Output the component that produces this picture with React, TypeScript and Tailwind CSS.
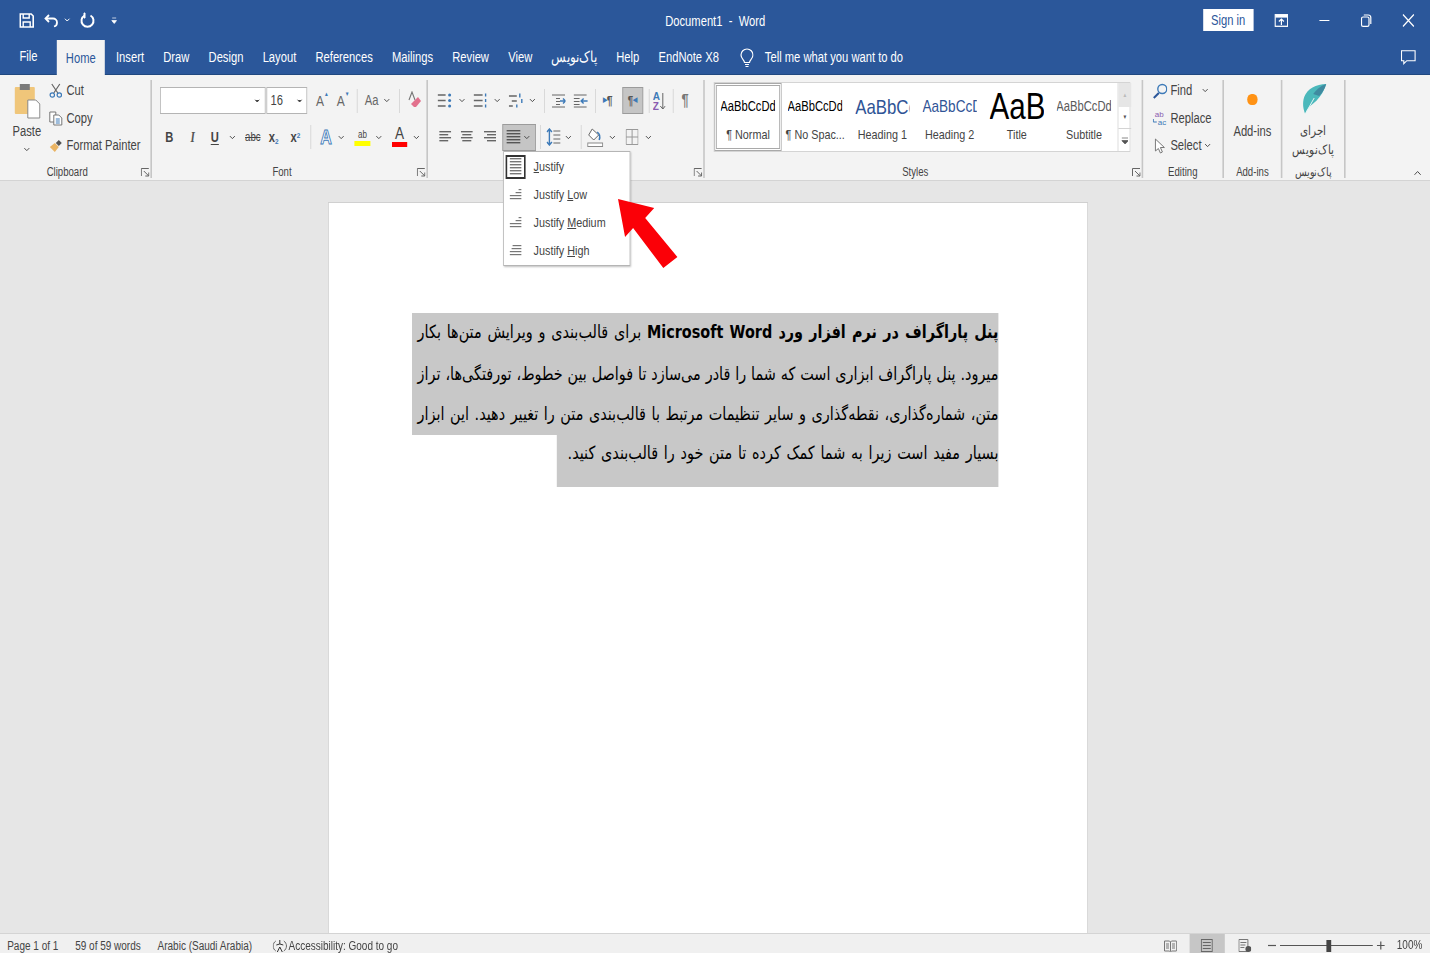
import { ChevronDown, ChevronUp } from "lucide-react";
import type { ReactNode } from "react";

// the whole window is drawn 1.25x wide and squeezed back (the screenshot is a squeezed image),
// so all x values below are in that wide space. Ico stretches its drawing to match.
const Chev = ({ className = "" }: { className?: string }) => (
  <ChevronDown className={"w-[11px] h-[9px] text-[#444] shrink-0 " + className} strokeWidth={2.5} preserveAspectRatio="none" />
);

const Ico = ({ w = 16, h = 16, children, className = "" }: { w?: number; h?: number; children: ReactNode; className?: string }) => (
  <svg width={w * 1.25} height={h} viewBox={`0 0 ${w} ${h}`} preserveAspectRatio="none" fill="none" className={"shrink-0 " + className}>
    {children}
  </svg>
);

const Sep = ({ h = "h-[24px]", className = "" }: { h?: string; className?: string }) => (
  <div className={`w-px ${h} bg-[#d2d2d2] shrink-0 ${className}`} />
);

const Launcher = () => (
  <Ico w={9} h={9}>
    <path d="M.5 8V.5H8M3 3l5 5M8 4.5V8H4.5" stroke="#666" />
  </Ico>
);

type Align = "left" | "center" | "right" | "full";

const Lines = ({ rows, w = 12, color = "#666", align = "full" }: { rows: number; w?: number; color?: string; align?: Align }) => (
  <Ico w={w} h={rows * 3}>
    {Array.from({ length: rows }, (_, i) => {
      const short = i % 2 === 1 && align !== "full";
      const width = short ? w - 3 : w;
      const x = !short || align === "left" ? 0 : align === "right" ? 3 : 1.5;
      return <rect key={i} x={x} y={i * 3} width={width} height={1.4} fill={color} />;
    })}
  </Ico>
);

const Stair = ({ widths }: { widths: number[] }) => (
  <Ico w={12} h={widths.length * 3}>
    {widths.map((wd, i) => (
      <rect key={i} x={12 - wd} y={i * 3} width={wd} height={1.2} fill="#777" />
    ))}
  </Ico>
);

const Group = ({ width, label, launcher, children }: { width: string; label: ReactNode; launcher?: boolean; children: ReactNode }) => (
  <div className={`relative h-[98px] mt-[5px] shrink-0 border-r-2 border-[#c6c6c6] ${width}`}>
    {children}
    <div className="absolute bottom-[-1px] left-0 right-0 h-[14px] flex justify-center text-[12px] leading-[14px] text-[#444]">
      {label}
      {launcher && (
        <span className="absolute right-[1px] top-[3px] flex">
          <Launcher />
        </span>
      )}
    </div>
  </div>
);

const tabs = ["Insert", "Draw", "Design", "Layout", "References", "Mailings", "Review", "View"];

function TitleBar() {
  return (
    <div className="h-[40px] flex items-center text-white pl-[24px] relative">
      <Ico w={15} h={15}>
        <path d="M1 1h11l2 2v11H1z" stroke="#fff" strokeWidth="1.6" />
        <path d="M4 1v4h6V1M4 14V9h7v5" stroke="#fff" strokeWidth="1.4" />
      </Ico>
      <Ico w={16} h={15} className="ml-[12px]">
        <path d="M5 2 1.500 5.500 5 9" stroke="#fff" strokeWidth="1.8" />
        <path d="M2 5.500h7a4 4 0 0 1 4 4 4 4 0 0 1-3 4" stroke="#fff" strokeWidth="1.8" />
      </Ico>
      <ChevronDown className="w-[10px] h-[8px] ml-[4px] text-white" strokeWidth={3} preserveAspectRatio="none" />
      <Ico w={15} h={16} className="ml-[11px]">
        <path d="M4.500 3.500a6 6 0 1 0 6 0" stroke="#fff" strokeWidth="2" />
        <path d="M4 1v5h1V1z" fill="#fff" stroke="#fff" />
      </Ico>
      <Ico w={6} h={7} className="ml-[20px]">
        <path d="M1 1h4M.5 3.500h5L3 6.500z" fill="#fff" stroke="#fff" strokeWidth=".7" />
      </Ico>
      <div className="absolute left-0 right-0 top-[13px] flex justify-center text-[14px] leading-[16px] pointer-events-none">
        <span>Document1&nbsp; -&nbsp; Word</span>
      </div>
      <div className="ml-auto flex items-center pr-[20px]">
        <div className="w-[63px] h-[22px] bg-white text-[#2b579a] text-[14px] flex items-center justify-center">Sign in</div>
        <Ico w={14} h={13} className="ml-[26px]">
          <rect x=".7" y=".7" width="12.6" height="11.6" stroke="#fff" strokeWidth="1.3" />
          <rect x="1" y="1" width="12" height="2.6" fill="#fff" />
          <path d="M7 11V5M4.500 7.500 7 5l2.500 2.500" stroke="#fff" strokeWidth="1.2" />
        </Ico>
        <Ico w={12} h={13} className="ml-[38px]">
          <path d="M1 6.500h10" stroke="#fff" strokeWidth="1.2" />
        </Ico>
        <Ico w={11} h={13} className="ml-[38px]">
          <rect x=".7" y="3" width="7.500" height="9.300" rx="1.6" stroke="#fff" strokeWidth="1.2" />
          <path d="M3 1h4.500A2.500 2.500 0 0 1 10 3.500V10" stroke="#fff" strokeWidth="1.2" />
        </Ico>
        <Ico w={12} h={13} className="ml-[38px]">
          <path d="M.5.5l11 12M11.500.5l-11 12" stroke="#fff" strokeWidth="1.2" />
        </Ico>
      </div>
    </div>
  );
}

function TabRow() {
  return (
    <div className="h-[35px] flex items-stretch text-white text-[14px] border-b border-[#20487f]">
      <div className="w-[71px] flex items-center justify-center pb-[1px]">File</div>
      <div className="w-[60px] bg-[#f3f3f3] text-[#2b579a] flex items-center justify-center h-[36px]">Home</div>
      <div className="flex items-center pl-[14px] pt-[1px] gap-[24px]">
        {tabs.map((t) => (
          <span key={t} className="whitespace-nowrap">
            {t}
          </span>
        ))}
        <span className="whitespace-nowrap text-[15px]">پاک‌نویس</span>
        <span className="whitespace-nowrap">Help</span>
        <span className="whitespace-nowrap">EndNote X8</span>
      </div>
      <div className="flex items-center ml-[26px] pt-[1px]">
        <Ico w={14} h={20}>
          <path d="M4.500 14.500c0-2.500-3.500-3.500-3.500-7.500a6 6 0 0 1 12 0c0 4-3.500 5-3.500 7.500z" stroke="#fff" strokeWidth="1.2" />
          <path d="M5 16.500h4M5.500 18.500h3" stroke="#fff" strokeWidth="1.2" />
        </Ico>
        <span className="ml-[14px] whitespace-nowrap">Tell me what you want to do</span>
      </div>
      <div className="ml-auto flex items-center pr-[18px]">
        <Ico w={15} h={15}>
          <path d="M.7.7h13.600v10H6l-3 3v-3H.7z" stroke="#fff" strokeWidth="1.1" />
        </Ico>
      </div>
    </div>
  );
}

const Row = ({ icon, text, chev }: { icon: ReactNode; text: string; chev?: ReactNode }) => (
  <div className="h-[27.5px] flex items-center">
    <span className="w-[18px] flex justify-center">{icon}</span>
    <span className="ml-[4px] whitespace-nowrap text-[14px]">{text}</span>
    {chev}
  </div>
);

function Clipboard() {
  return (
    <Group width="w-[190px]" label={<span className="mr-[20px]">Clipboard</span>} launcher>
      <div className="flex text-[#444] pl-[16px]">
        <div className="w-[35px] flex flex-col items-center">
          <Ico w={28} h={36} className="mt-[3px]">
            <rect x="2" y="4" width="20" height="27" rx="1" fill="#f0c67a" />
            <rect x="7" y="1" width="10" height="6" fill="#7a7a7a" />
            <path d="M15 17h8l4 4v14H15z" fill="#fff" stroke="#888" />
          </Ico>
          <span className="text-[14px] leading-[16px] mt-[4px]">Paste</span>
          <Chev className="mt-[6px]" />
        </div>
        <div className="ml-[10px] mt-[-3px]">
          <Row
            text="Cut"
            icon={
              <Ico w={14} h={15}>
                <path d="M3 1l6 9M11 1 5 10" stroke="#666" strokeWidth="1.2" />
                <circle cx="3.500" cy="12" r="2.200" stroke="#3d7ab8" strokeWidth="1.2" />
                <circle cx="10.500" cy="12" r="2.200" stroke="#3d7ab8" strokeWidth="1.2" />
              </Ico>
            }
          />
          <Row
            text="Copy"
            icon={
              <Ico w={14} h={15}>
                <path d="M1 1h6v10H1z" stroke="#777" fill="#fff" />
                <path d="M5 4h5l3 3v7H5z" stroke="#777" fill="#fff" />
                <path d="M7 8h4M7 10h4M7 12h4" stroke="#3d7ab8" />
              </Ico>
            }
          />
          <Row
            text="Format Painter"
            icon={
              <Ico w={14} h={14}>
                <path d="M1 8 6 4l4 4-4 5z" fill="#eab464" />
                <path d="m7 4 3-3 3 3-3 3z" fill="#555" />
              </Ico>
            }
          />
        </div>
      </div>
    </Group>
  );
}

const GrowA = ({ mark, className = "" }: { mark: string; className?: string }) => (
  <span className={"w-[15px] relative flex text-[15px] leading-none text-[#666] " + className}>
    A<span className="absolute right-[-1px] top-[-2px] text-[6px] text-[#3d7ab8]">{mark}</span>
  </span>
);

function FontGroup() {
  return (
    <Group width="w-[345px]" label={<span className="mr-[18px]">Font</span>} launcher>
      <div className="pl-[10px] text-[#444]">
        <div className="flex items-center mt-[7px] h-[27px]">
          <div className="w-[132px] h-[27px] bg-white border border-[#b4b4b4] flex items-center justify-end pr-[5px]">
            <ChevronDown className="w-[9px] h-[8px] text-[#444] fill-[#444]" strokeWidth={3} preserveAspectRatio="none" />
          </div>
          <div className="w-[51px] h-[27px] ml-[1px] bg-white border border-[#b4b4b4] flex items-center pl-[4px] text-[14px]">
            16
            <ChevronDown className="w-[9px] h-[8px] ml-auto mr-[4px] text-[#444] fill-[#444]" strokeWidth={3} preserveAspectRatio="none" />
          </div>
          <GrowA mark="▲" className="ml-[11px]" />
          <GrowA mark="▼" className="ml-[11px]" />
          <Sep className="ml-[10px]" />
          <span className="ml-[9px] text-[14px] text-[#666]">Aa</span>
          <Chev className="ml-[5px]" />
          <Sep className="ml-[10px]" />
          <Ico w={14} h={19} className="ml-[10px]">
            <path d="M1 9 4 1l3 8" stroke="#777" strokeWidth="1.1" />
            <path d="m3 13 7-7 3 4-5 6H6z" fill="#e2718d" />
          </Ico>
        </div>
        <div className="flex items-center mt-[10px] h-[26px] text-[14px]">
          <span className="ml-[6px] w-[11px] font-bold text-center">B</span>
          <span className="ml-[19px] w-[10px] italic font-bold font-['Liberation_Serif'] text-[#555] text-center">I</span>
          <span className="ml-[16px] w-[13px] font-semibold underline underline-offset-2 text-center">U</span>
          <Chev className="ml-[10px]" />
          <span className="ml-[10px] text-[12px] line-through w-[20px] text-center">abc</span>
          <span className="ml-[10px] w-[15px] font-semibold">
            x<sub className="text-[8px] text-[#3d7ab8]">2</sub>
          </span>
          <span className="ml-[12px] w-[16px] font-semibold">
            x<sup className="text-[8px] text-[#3d7ab8]">2</sup>
          </span>
          <Sep className="ml-[9px]" />
          <span className="ml-[9px] w-[19px] text-center text-[20px] leading-none text-white font-bold [-webkit-text-stroke:1px_#3d7ab8]">A</span>
          <Chev className="ml-[4px]" />
          <div className="ml-[11px] w-[20px] flex flex-col items-center">
            <span className="text-[10px] leading-[12px]">ab</span>
            <div className="w-[20px] h-[5px] bg-[#ffff00]" />
          </div>
          <Chev className="ml-[5px]" />
          <div className="ml-[11px] w-[19px] flex flex-col items-center">
            <span className="text-[17px] leading-[14px]">A</span>
            <div className="w-[19px] h-[5px] mt-[1px] bg-[#ff0000]" />
          </div>
          <Chev className="ml-[6px]" />
        </div>
      </div>
    </Group>
  );
}

function ParagraphGroup() {
  return (
    <Group width="w-[346px]" label={<span>&nbsp;</span>} launcher>
      <div className="pl-[12px]">
        <div className="flex items-center h-[27px] mt-[7px]">
          <Ico w={14} h={15}>
            <path d="M0 2h8M0 7.500h8M0 13h8" stroke="#666" strokeWidth="1.3" />
            <circle cx="12" cy="2" r="1.500" fill="#3d7ab8" />
            <circle cx="12" cy="7.500" r="1.500" fill="#3d7ab8" />
            <circle cx="12" cy="13" r="1.500" fill="#3d7ab8" />
          </Ico>
          <Chev className="ml-[7px]" />
          <Ico w={14} h={15} className="ml-[9px]">
            <path d="M0 2h9M0 7.500h9M0 13h9" stroke="#666" strokeWidth="1.3" />
            <path d="M12 .5v3M12 6v3M12 11.500v3" stroke="#3d7ab8" strokeWidth="1.4" />
          </Ico>
          <Chev className="ml-[7px]" />
          <Ico w={14} h={16} className="ml-[9px]">
            <path d="M0 3h8M3 8h5M0 13h4" stroke="#666" strokeWidth="1.3" />
            <path d="M11 .5v4M13 6v4M8 11.500v3" stroke="#3d7ab8" strokeWidth="1.4" />
          </Ico>
          <Chev className="ml-[6px]" />
          <Sep className="ml-[9px]" />
          <Ico w={14} h={14} className="ml-[9px]">
            <path d="M0 1h13M4 4.500h4M4 7.500h4M4 10.500h4M0 13h13" stroke="#666" />
            <path d="M8 7h5M11 4.500 13.500 7 11 9.500" stroke="#3d7ab8" strokeWidth="1.4" />
          </Ico>
          <Ico w={14} h={14} className="ml-[10px]">
            <path d="M0 1h13M0 4.500h6M0 7.500h6M0 10.500h6M0 13h13" stroke="#666" />
            <path d="M7 7h7M10 4.500 7.500 7 10 9.500" stroke="#3d7ab8" strokeWidth="1.4" />
          </Ico>
          <Sep className="ml-[9px]" />
          <span className="ml-[9px] w-[16px] text-[13px] font-bold text-[#555] flex items-center">
            <span className="text-[7px] text-[#3d7ab8]">▶</span>¶
          </span>
          <div className="ml-[8px] w-[26px] h-[27px] bg-[#c5c5c5] border border-[#9b9b9b] flex items-center justify-center text-[12px] font-bold text-[#555]">
            ¶<span className="text-[7px] text-[#3d7ab8]">◀</span>
          </div>
          <Sep className="ml-[7px]" />
          <Ico w={13} h={20} className="ml-[4px]">
            <text x="0" y="9" fontSize="10" fill="#3d7ab8" fontWeight="bold" fontFamily="Liberation Sans">A</text>
            <text x="0" y="19" fontSize="10" fill="#8a5cb0" fontWeight="bold" fontFamily="Liberation Sans">Z</text>
            <path d="M10 2v16M7.500 15l2.500 3 2.500-3" stroke="#666" />
          </Ico>
          <Sep className="ml-[9px]" />
          <span className="ml-[10px] text-[16px] font-bold text-[#777]">¶</span>
        </div>
        <div className="flex items-center h-[26px] mt-[10px] ml-[2px]">
          <Lines rows={4} align="left" />
          <span className="ml-[12px] flex">
            <Lines rows={4} align="center" />
          </span>
          <span className="ml-[14px] flex">
            <Lines rows={4} align="right" />
          </span>
          <div className="ml-[8px] w-[42px] h-[27px] bg-[#c5c5c5] border border-[#9b9b9b] flex items-center pl-[4px]">
            <Lines rows={5} w={14} color="#555" />
            <Chev className="ml-[2px]" />
          </div>
          <Sep className="ml-[5px]" />
          <Ico w={14} h={18} className="ml-[7px]">
            <path d="M3 1v16M.5 4 3 1l2.500 3M.5 14 3 17l2.500-3" stroke="#3d7ab8" strokeWidth="1.4" />
            <path d="M7 3h7M7 7h7M7 11h7M7 15h7" stroke="#666" />
          </Ico>
          <Chev className="ml-[4px]" />
          <Sep className="ml-[10px]" />
          <Ico w={16} h={20} className="ml-[7px]">
            <path d="M5 2 1.500 8l5 5 5-5z" stroke="#666" fill="#fff" />
            <path d="M10 5c3 2 3 5 2 8" stroke="#3d7ab8" strokeWidth="1.5" />
            <rect x=".5" y="16" width="15" height="3.500" stroke="#888" fill="#fff" />
          </Ico>
          <Chev className="ml-[6px]" />
          <Ico w={13} h={16} className="ml-[11px]">
            <path d="M.5.5h12v15H.5zM6.500.5v15M.5 8h12" stroke="#999" />
          </Ico>
          <Chev className="ml-[7px]" />
        </div>
      </div>
    </Group>
  );
}

const styleItems = [
  { sample: "AaBbCcDd", name: "¶ Normal", cls: "text-[14px] text-black justify-center", active: true },
  { sample: "AaBbCcDd", name: "¶ No Spac...", cls: "text-[14px] text-black justify-center" },
  { sample: "AaBbCc", name: "Heading 1", cls: "text-[21px] text-[#2f5496] justify-start" },
  { sample: "AaBbCcD", name: "Heading 2", cls: "text-[17px] text-[#2f5496] justify-start" },
  { sample: "AaB", name: "Title", cls: "text-[37px] text-black justify-start" },
  { sample: "AaBbCcDd", name: "Subtitle", cls: "text-[14px] text-[#5a5a5a] justify-center" },
];

function StylesGroup() {
  return (
    <Group width="w-[548px]" label={<span className="mr-[20px]">Styles</span>} launcher>
      <div className="ml-[11px] mt-[2px] w-[521px] h-[70px] bg-white border border-[#d4d4d4] flex">
        {styleItems.map((s) => (
          <div
            key={s.name}
            className={
              "w-[84px] shrink-0 flex flex-col items-center text-[#444] border-[3px] border-double " +
              (s.active ? "border-[#a9a9a9]" : "border-transparent")
            }
          >
            <div className={"h-[41px] w-[68px] overflow-hidden flex items-center whitespace-nowrap " + s.cls}>{s.sample}</div>
            <span className="text-[13.5px] leading-[16px] whitespace-nowrap">{s.name}</span>
          </div>
        ))}
        <div className="w-[17px] shrink-0 border-l border-[#d4d4d4] flex flex-col items-center">
          <div className="h-[24px] w-full bg-[#e6e6e6] flex items-center justify-center text-[6px] text-[#bbb]">▲</div>
          <div className="h-[22px] w-full border-b border-[#d4d4d4] flex items-center justify-center text-[6px] text-[#555]">▼</div>
          <div className="h-[22px] w-full flex items-center justify-center">
            <Ico w={7} h={7}>
              <path d="M0 1h7M0 3.500h7L3.500 7z" stroke="#555" fill="#555" strokeWidth=".7" />
            </Ico>
          </div>
        </div>
      </div>
    </Group>
  );
}

function EditingGroup() {
  return (
    <Group width="w-[101px]" label="Editing">
      <div className="pl-[12px] mt-[-3px] text-[#444]">
        <Row
          text="Find"
          icon={
            <Ico w={15} h={16}>
              <circle cx="9.500" cy="6" r="4.500" stroke="#3d7ab8" strokeWidth="1.4" />
              <path d="m6 10-5 5" stroke="#2b579a" strokeWidth="2" />
            </Ico>
          }
          chev={<Chev className="ml-[11px]" />}
        />
        <Row
          text="Replace"
          icon={
            <Ico w={15} h={16}>
              <text x="2" y="7" fontSize="8" fill="#8a5cb0" fontFamily="Liberation Sans">ab</text>
              <text x="5" y="15" fontSize="8" fill="#3d7ab8" fontFamily="Liberation Sans">ac</text>
              <path d="M.5 9v3H4" stroke="#3d7ab8" />
            </Ico>
          }
        />
        <Row
          text="Select"
          icon={
            <Ico w={11} h={16}>
              <path d="M1 1v12l3-2.500 2 4.500 2-1-2-4.500h4z" stroke="#777" fill="#fff" />
            </Ico>
          }
          chev={<Chev className="ml-[2px]" />}
        />
      </div>
    </Group>
  );
}

function Ribbon() {
  return (
    <div className="h-[106px] bg-[#f3f3f3] flex border-b border-[#d4d4d4] relative">
      <Clipboard />
      <FontGroup />
      <ParagraphGroup />
      <StylesGroup />
      <EditingGroup />
      <Group width="w-[73px]" label="Add-ins">
        <div className="flex flex-col items-center text-[#444]">
          <div className="w-[13px] h-[11px] rounded-full bg-[#ff9214] mt-[14px]" />
          <span className="text-[14px] mt-[16px]">Add-ins</span>
        </div>
      </Group>
      <Group width="w-[79px]" label={<span dir="rtl">پاک‌نویس</span>}>
        <div className="flex flex-col items-center text-[#444]">
          <Ico w={28} h={36} className="mt-[3px]">
            <path d="M27 1C17 1 8 6 5 14c-2 6-1 12 1 17 2-6 6-9 11-13 5-5 8-11 10-17z" fill="#4bb8bb" />
            <path d="M27 1C21 3 17 7 14 11l6 2c3-3 6-8 7-12z" fill="#3f8aa0" />
            <path d="M6 31 15 15" stroke="#e3f5f5" />
          </Ico>
          <span dir="rtl" className="text-[13px] leading-[19px] mt-[2px] text-center">
            اجرای
            <br />
            پاک‌نویس
          </span>
        </div>
      </Group>
      <ChevronUp className="absolute right-[9px] bottom-[1px] w-[14px] h-[12px] text-[#444]" preserveAspectRatio="none" />
    </div>
  );
}

function JustifyMenu() {
  return (
    <div className="absolute left-[629px] top-[151px] w-[159px] h-[115px] bg-white border border-[#b5b5b5] shadow-[1px_1px_2px_rgba(0,0,0,.25)] z-10 pt-[1px] text-[13.5px] text-[#444]">
      <div className="h-[28px] flex items-center">
        <div className="w-[25px] h-[24px] ml-[2px] border-2 border-[#333] flex items-center justify-center">
          <Lines rows={6} w={12} color="#777" />
        </div>
        <span className="ml-[10px]">
          <u>J</u>ustify
        </span>
      </div>
      <div className="h-[28px] flex items-center">
        <div className="w-[25px] ml-[2px] flex justify-center">
          <Stair widths={[3, 6, 12, 12]} />
        </div>
        <span className="ml-[10px]">
          Justify <u>L</u>ow
        </span>
      </div>
      <div className="h-[28px] flex items-center">
        <div className="w-[25px] ml-[2px] flex justify-center">
          <Stair widths={[3, 6, 12, 12]} />
        </div>
        <span className="ml-[10px]">
          Justify <u>M</u>edium
        </span>
      </div>
      <div className="h-[28px] flex items-center">
        <div className="w-[25px] ml-[2px] flex justify-center">
          <Stair widths={[9, 10, 12, 12]} />
        </div>
        <span className="ml-[10px]">
          Justify <u>H</u>igh
        </span>
      </div>
    </div>
  );
}

const lineCls = "w-full h-[40px] leading-[38px] pl-[7px] bg-[#c8c8c8] text-black [text-align:justify] [text-align-last:justify]";

function Page() {
  return (
    <div className="w-[950px] h-[731px] bg-white border border-[#d0d0d0] border-b-0 pt-[110px] pl-[104px] pr-[111px]">
      <div dir="rtl" className="text-[18px] font-['DejaVu_Sans',sans-serif]">
        <div className={lineCls + " !h-[42px]"}>
          <b>پنل پاراگراف در نرم افزار ورد Microsoft Word</b> برای قالب‌بندی و ویرایش متن‌ها بکار
        </div>
        <div className={lineCls}>میرود. پنل پاراگراف ابزاری است که شما را قادر می‌سازد تا فواصل بین خطوط، تورفتگی‌ها، تراز</div>
        <div className={lineCls}>متن، شماره‌گذاری، نقطه‌گذاری و سایر تنظیمات مرتبط با قالب‌بندی متن را تغییر دهید. این ابزار</div>
        <div className="w-[552px] h-[52px] bg-[#c8c8c8] leading-[36px] whitespace-nowrap text-black [word-spacing:1.5px]">
          بسیار مفید است زیرا به شما کمک کرده تا متن خود را قالب‌بندی کنید.
        </div>
      </div>
    </div>
  );
}

function StatusBar() {
  return (
    <div className="h-[20px] bg-[#f0f0f0] border-t border-[#d4d4d4] flex text-[12.5px] text-[#444] pl-[9px] whitespace-nowrap">
      <div className="flex items-center pt-[5px]">
        <span>Page 1 of 1</span>
        <span className="ml-[21px]">59 of 59 words</span>
        <span className="ml-[21px]">Arabic (Saudi Arabia)</span>
        <Ico w={14} h={14} className="ml-[26px]">
          <path d="M3 2a6 6 0 0 0 0 10M11 2a6 6 0 0 1 0 10" stroke="#666" />
          <path d="M7 1v4M3.500 6 7 5l3.500 1M4.500 13 7 8l2.500 5" stroke="#333" />
        </Ico>
        <span className="ml-[2px]">Accessibility: Good to go</span>
      </div>
      <div className="ml-auto flex items-center pt-[4px]">
        <Ico w={13} h={12}>
          <path d="M.5 1h5l1 1 1-1h5v10h-5l-1 1-1-1h-5zM6.500 2v9M2 4h3M2 6h3M2 8h3M8 4h3M8 6h3M8 8h3" stroke="#777" />
        </Ico>
        <div className="w-[44px] self-stretch -mt-[4px] pt-[4px] ml-[16px] bg-[#c6c6c6] flex items-center justify-center">
          <Ico w={12} h={13}>
            <rect x=".5" y=".5" width="11" height="12" stroke="#666" />
            <path d="M2 3.500h8M2 6.500h8M2 9.500h8" stroke="#666" />
          </Ico>
        </div>
        <Ico w={13} h={13} className="ml-[17px]">
          <path d="M.5.5h9v12h-9zM2 3.500h6M2 6h5M2 8.500h4" stroke="#777" />
          <circle cx="10" cy="10" r="3" fill="#555" />
        </Ico>
        <Ico w={8} h={9} className="ml-[21px]">
          <path d="M0 4.500h8" stroke="#555" strokeWidth="1.2" />
        </Ico>
        <div className="w-[116px] h-px bg-[#555] ml-[5px] relative flex items-center">
          <div className="absolute left-[58px] w-[6px] h-[12px] bg-[#444]" />
        </div>
        <Ico w={8} h={9} className="ml-[5px]">
          <path d="M0 4.500h8M4 .5v8" stroke="#555" strokeWidth="1.2" />
        </Ico>
        <span className="ml-[15px] mr-[10px]">100%</span>
      </div>
    </div>
  );
}

export default function App() {
  return (
    <div className="w-[1430px] h-[953px] overflow-hidden">
      <div className="w-[1788px] h-[953px] scale-x-[.8] origin-top-left relative bg-[#e6e6e6] flex flex-col font-['Liberation_Sans',sans-serif]">
        <div className="bg-[#2b579a]">
          <TitleBar />
          <TabRow />
        </div>
        <Ribbon />
        <div className="flex-1 pl-[410px] pt-[21px] overflow-hidden">
          <Page />
        </div>
        <StatusBar />
        <JustifyMenu />
        <svg width="78" height="72" viewBox="0 0 62 72" preserveAspectRatio="none" className="absolute left-[770px] top-[197px] z-20">
          <path d="M2 2 38 11 29 21 61 60 47 71 17 31 9 40z" fill="#fb0007" />
        </svg>
      </div>
    </div>
  );
}
